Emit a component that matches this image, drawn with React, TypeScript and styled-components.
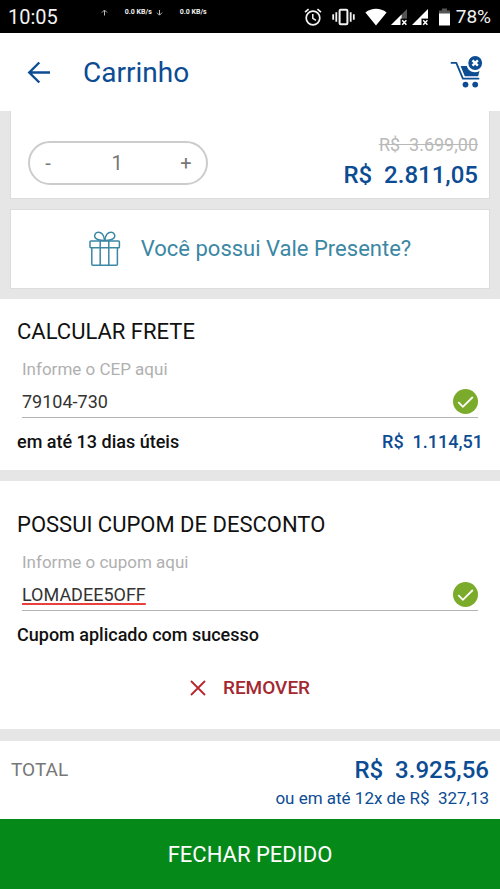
import React, { useState } from "react";
import styled, { createGlobalStyle } from "styled-components";

const BLUE = "#0c4c93";

const GlobalStyle = createGlobalStyle`
  *, *::before, *::after { box-sizing: border-box; }
  body { margin: 0; background: #e6e6e6; }
  body, button, input { font-family: Roboto, "Liberation Sans", sans-serif; }
  button { margin: 0; padding: 0; border: 0; background: none; cursor: pointer; }
  h1, h2, p { margin: 0; font-weight: 400; }
  svg { display: block; flex: none; }
`;

const Page = styled.div`
  display: flex;
  flex-direction: column;
  min-height: 100vh;
`;

const StatusBar = styled.div`
  display: flex;
  justify-content: space-between;
  height: 33px;
  padding: 0 9px 0 8px;
  background: #000;
  color: #f2f2f2;
`;

const StatusGroup = styled.div<{ $gap: number }>`
  display: flex;
  align-items: center;
  gap: ${(p) => p.$gap}px;
`;

const Clock = styled.span`
  font-size: 20px;
  line-height: 34px;
`;

const NetSpeed = styled.div`
  display: flex;
  align-items: center;
  align-self: flex-start;
  gap: 17px;
  margin: 7px 0 0 43px;
  font-size: 7px;
  line-height: 10px;
  font-weight: 700;
`;

const SpeedPair = styled.span`
  display: flex;
  align-items: center;
  gap: 4px;
`;

const Battery = styled.span`
  font-size: 19px;
  line-height: 34px;
`;

const Header = styled.header`
  display: flex;
  align-items: center;
  height: 78px;
  padding: 2px 17px 0 27px;
  background: #fff;
  color: ${BLUE};
`;

const IconButton = styled.button`
  color: ${BLUE};
`;

const Title = styled.h1`
  flex: 1;
  margin-left: 32px;
  font-size: 28px;
  line-height: 36px;
`;

const Content = styled.main`
  flex: 1;
  display: flex;
  flex-direction: column;
  padding-bottom: 12px;
`;

const Card = styled.section`
  margin: 0 10px 10px;
  border: 1px solid #dcdcdc;
  background: #fff;
`;

const ProductCard = styled(Card)`
  display: flex;
  align-items: center;
  justify-content: space-between;
  border-top: 0;
  padding: 24px 11px 8px 17px;
`;

const Stepper = styled.div`
  display: flex;
  align-items: center;
  justify-content: space-between;
  width: 180px;
  height: 44px;
  padding: 0 14px 0 12px;
  border: 2px solid #ccc;
  border-radius: 22px;
`;

const StepButton = styled.button`
  width: 12px;
  color: #777;
  font-size: 20px;
  line-height: 30px;
  text-align: center;
`;

const Quantity = styled.output`
  color: #777;
  font-size: 20px;
  line-height: 30px;
`;

const Prices = styled.div`
  display: flex;
  flex-direction: column;
  align-items: flex-end;
  gap: 5px;
`;

const OldPrice = styled.s`
  color: #b9b9b9;
  font-size: 18px;
  line-height: 20px;
  white-space: pre;
`;

const Price = styled.strong<{ $large?: boolean }>`
  color: ${BLUE};
  font-weight: 500;
  font-size: ${(p) => (p.$large ? 24 : 18)}px;
  line-height: ${(p) => (p.$large ? 30 : 24)}px;
  white-space: pre;
`;

const VoucherButton = styled.button`
  display: flex;
  align-items: center;
  justify-content: center;
  gap: 20px;
  width: 100%;
  height: 78px;
  color: #3c87a4;
  font-size: 22px;
  line-height: 26px;
`;

const Section = styled.section<{ $roomy?: boolean }>`
  padding: ${(p) => (p.$roomy ? "31px 17px 29px" : "20px 17px 16px")};
  background: #fff;

  & + & {
    margin-top: 11px;
  }
`;

const SectionTitle = styled.h2`
  color: #111;
  font-size: 22px;
  line-height: 26px;
`;

const Field = styled.div`
  margin: 14px 5px 12px;
`;

const FieldLabel = styled.label`
  display: block;
  color: #b0b0b0;
  font-size: 17px;
  line-height: 20px;
`;

const FieldRow = styled.div`
  display: flex;
  align-items: center;
  margin-top: 7px;
  padding-bottom: 1px;
  border-bottom: 1px solid #b3b3b3;
`;

const FieldInput = styled.input<{ $marked?: boolean }>`
  flex: 1;
  min-width: 0;
  height: 30px;
  padding: 0;
  border: 0;
  outline: 0;
  background: none;
  color: #333;
  font-size: 18px;
  ${(p) =>
    p.$marked &&
    `text-decoration: underline #e8403c 3px;
    text-underline-offset: 2px;
    text-decoration-skip-ink: none;`}
`;

const ResultRow = styled.div`
  display: flex;
  justify-content: space-between;
`;

const Result = styled.p`
  color: #111;
  font-size: 18px;
  font-weight: 500;
  line-height: 24px;
`;

const RemoveButton = styled.button`
  display: flex;
  align-items: center;
  gap: 17px;
  margin: 29px auto 0;
  color: #a3282f;
  font-size: 19px;
  font-weight: 500;
  line-height: 24px;
`;

const Summary = styled.section`
  display: flex;
  justify-content: space-between;
  padding: 14px 11px 11px;
  background: #fff;
`;

const SummaryLabel = styled.span`
  color: #777;
  font-size: 19px;
  line-height: 30px;
`;

const SummaryValues = styled.div`
  display: flex;
  flex-direction: column;
  align-items: flex-end;
  gap: 3px;
`;

const Installments = styled.span`
  color: ${BLUE};
  font-size: 17px;
  line-height: 20px;
  white-space: pre;
`;

const CheckoutButton = styled.button`
  width: 100%;
  height: 70px;
  padding-top: 2px;
  background: #058a1a;
  color: #fff;
  font-size: 22px;
  line-height: 26px;
`;

const SpeedArrow = ({ down }: { down?: boolean }) => (
  <svg width="7" height="7" viewBox="0 0 7 7" fill="none" stroke="#bbb" strokeWidth="1">
    <path d={down ? "M3.5 1v5M1 3.7l2.5 2.5L6 3.7" : "M3.5 6.5v-5M1 3.5L3.5 1 6 3.5"} />
  </svg>
);

const AlarmIcon = () => (
  <svg width="18" height="18" viewBox="0 0 18 18" fill="none" stroke="#f2f2f2">
    <circle cx="9" cy="10" r="6.8" strokeWidth="1.7" />
    <path d="M8.8 6v4.4l3.2 2" strokeWidth="1.5" />
    <path d="M1 4.2L4.6 1.2M17 4.2l-3.6-3" strokeWidth="1.7" />
  </svg>
);

const VibrateIcon = () => (
  <svg width="23" height="18" viewBox="0 0 23 18" fill="none" stroke="#f2f2f2">
    <rect x="7.6" y="1.8" width="7.8" height="14.4" rx="1" strokeWidth="2" />
    <path d="M4.3 4.2v9.6M18.7 4.2v9.6" strokeWidth="1.8" />
    <path d="M1.2 6.2v5.6M21.8 6.2v5.6" strokeWidth="1.8" />
  </svg>
);

const WifiIcon = () => (
  <svg width="22" height="18" viewBox="0 0 22 18" fill="#fff">
    <path d="M0.4 4.4C6.6-.4 15.4-.4 21.6 4.4L11 17.6z" />
  </svg>
);

const SignalIcon = ({ weak }: { weak?: boolean }) => (
  <svg width="17" height="18" viewBox="0 0 17 18">
    <path d="M16 1v16H0z" fill={weak ? "#555" : "#fff"} />
    {weak && <path d="M10.6 6.4V17H0z" fill="#fff" />}
    <path d="M9.5 10.6H17V18H9.5z" fill="#000" />
    <path d="M11.2 12.2l4.2 4.6M15.4 12.2l-4.2 4.6" stroke="#fff" strokeWidth="1.5" />
  </svg>
);

const BatteryIcon = () => (
  <svg width="11" height="18" viewBox="0 0 11 18">
    <path d="M3 0.5h5V2.5h3V6H0V2.5h3z" fill="#555" />
    <path d="M0 5.5h11V17.5H0z" fill="#fff" />
  </svg>
);

const BackIcon = () => (
  <svg width="24" height="24" viewBox="0 0 24 24" fill="none" stroke="currentColor" strokeWidth="2.4">
    <path d="M23 11.5H3M12.3 1.5l-10 10 10 10" />
  </svg>
);

const CartIcon = () => (
  <svg width="33" height="34" viewBox="0 0 33 34" fill="currentColor">
    <path
      d="M1.5 6.9h4.8l6.6 15.8h15.6"
      fill="none"
      stroke="currentColor"
      strokeWidth="1.8"
      strokeLinejoin="round"
      strokeLinecap="round"
    />
    <path d="M10.6 10h6.2c1 3.8 4 6.2 8 6.2 1.8 0 3.3-.4 4.7-1.2l-1.4 5.2H14.8z" />
    <circle cx="15.5" cy="28.6" r="2.9" />
    <circle cx="25.2" cy="28.6" r="2.9" />
    <circle cx="25.2" cy="7" r="6.9" />
    <path d="M22.5 4.3l5.4 5.4M27.9 4.3l-5.4 5.4" stroke="#fff" strokeWidth="2.4" />
  </svg>
);

const GiftIcon = () => (
  <svg
    width="32"
    height="36"
    viewBox="0 0 32 36"
    fill="none"
    stroke="currentColor"
    strokeWidth="1.5"
    strokeLinejoin="round"
  >
    <rect x="1" y="10" width="29.4" height="6.8" rx="0.8" />
    <path d="M2.8 16.8V33.2q0 1 1 1H27.4q1 0 1-1V16.8M11.2 10v24.2M19.8 10v24.2" />
    <path d="M15.7 9.4C13.6 9.4 8 9.2 6.2 6.8 4.6 4.4 6.4 1.3 9.4 1.3c3.6 0 5.7 4.2 6.3 8.1z" />
    <path d="M15.7 9.4c2.1 0 7.7-.2 9.5-2.6 1.6-2.4-.2-5.5-3.2-5.5-3.6 0-5.7 4.2-6.3 8.1z" />
  </svg>
);

const CheckBadge = () => (
  <svg width="25" height="25" viewBox="0 0 25 25" role="img" aria-label="Válido">
    <circle cx="12.5" cy="12.5" r="12.5" fill="#7bab2b" />
    <path d="M5.3 13.2l4.6 4.6L19.8 8" fill="none" stroke="#fff" strokeWidth="1.8" />
  </svg>
);

const CloseIcon = () => (
  <svg width="16" height="16" viewBox="0 0 16 16" fill="none" stroke="#b8262c" strokeWidth="1.8">
    <path d="M1 1l14 14M15 1L1 15" />
  </svg>
);

interface ValidatedFieldProps {
  id: string;
  label: string;
  initial: string;
  marked?: boolean;
}

const ValidatedField = ({ id, label, initial, marked }: ValidatedFieldProps) => {
  const [value, setValue] = useState(initial);
  return (
    <Field>
      <FieldLabel htmlFor={id}>{label}</FieldLabel>
      <FieldRow>
        <FieldInput
          id={id}
          value={value}
          spellCheck={false}
          $marked={marked}
          onChange={(e) => setValue(e.target.value)}
        />
        <CheckBadge />
      </FieldRow>
    </Field>
  );
};

export default function App() {
  const [quantity, setQuantity] = useState(1);

  return (
    <Page>
      <GlobalStyle />
      <StatusBar>
        <StatusGroup $gap={0}>
          <Clock>10:05</Clock>
          <NetSpeed>
            <SpeedPair>
              <SpeedArrow />
            </SpeedPair>
            <SpeedPair>
              0.0 KB/s
              <SpeedArrow down />
            </SpeedPair>
            <SpeedPair>0.0 KB/s</SpeedPair>
          </NetSpeed>
        </StatusGroup>
        <StatusGroup $gap={6}>
          <StatusGroup $gap={10}>
            <AlarmIcon />
            <VibrateIcon />
            <StatusGroup $gap={4}>
              <WifiIcon />
              <SignalIcon weak />
              <SignalIcon />
            </StatusGroup>
            <BatteryIcon />
          </StatusGroup>
          <Battery>78%</Battery>
        </StatusGroup>
      </StatusBar>

      <Header>
        <IconButton aria-label="Voltar">
          <BackIcon />
        </IconButton>
        <Title>Carrinho</Title>
        <IconButton aria-label="Esvaziar carrinho">
          <CartIcon />
        </IconButton>
      </Header>

      <Content>
        <ProductCard>
          <Stepper>
            <StepButton aria-label="Diminuir" onClick={() => setQuantity((q) => Math.max(1, q - 1))}>
              -
            </StepButton>
            <Quantity>{quantity}</Quantity>
            <StepButton aria-label="Aumentar" onClick={() => setQuantity((q) => q + 1)}>
              +
            </StepButton>
          </Stepper>
          <Prices>
            <OldPrice>{"R$  3.699,00"}</OldPrice>
            <Price $large>{"R$  2.811,05"}</Price>
          </Prices>
        </ProductCard>

        <Card>
          <VoucherButton>
            <GiftIcon />
            Você possui Vale Presente?
          </VoucherButton>
        </Card>

        <Section>
          <SectionTitle>CALCULAR FRETE</SectionTitle>
          <ValidatedField id="cep" label="Informe o CEP aqui" initial="79104-730" />
          <ResultRow>
            <Result>em até 13 dias úteis</Result>
            <Price>{"R$  1.114,51"}</Price>
          </ResultRow>
        </Section>

        <Section $roomy>
          <SectionTitle>POSSUI CUPOM DE DESCONTO</SectionTitle>
          <ValidatedField id="cupom" label="Informe o cupom aqui" initial="LOMADEE5OFF" marked />
          <Result>Cupom aplicado com sucesso</Result>
          <RemoveButton>
            <CloseIcon />
            REMOVER
          </RemoveButton>
        </Section>
      </Content>

      <Summary>
        <SummaryLabel>TOTAL</SummaryLabel>
        <SummaryValues>
          <Price $large>{"R$  3.925,56"}</Price>
          <Installments>{"ou em até 12x de R$  327,13"}</Installments>
        </SummaryValues>
      </Summary>
      <CheckoutButton>FECHAR PEDIDO</CheckoutButton>
    </Page>
  );
}
